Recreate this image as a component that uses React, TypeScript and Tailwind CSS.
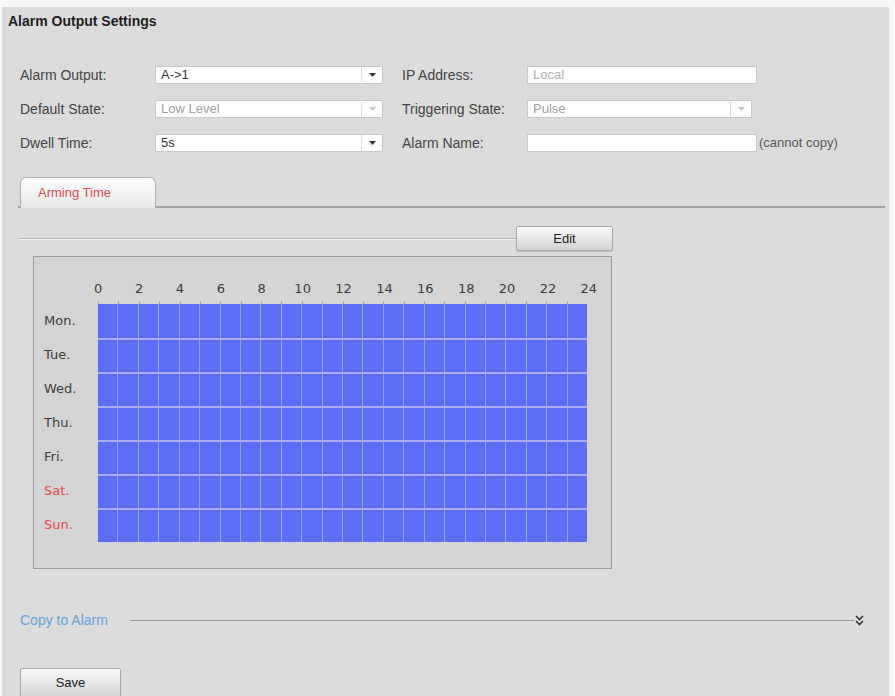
import React from "react";

const HOURS = Array.from({ length: 25 }, (_, i) => i);
const DAYS = [
  { label: "Mon.", weekend: false },
  { label: "Tue.", weekend: false },
  { label: "Wed.", weekend: false },
  { label: "Thu.", weekend: false },
  { label: "Fri.", weekend: false },
  { label: "Sat.", weekend: true },
  { label: "Sun.", weekend: true },
];

function Arrow({ disabled }: { disabled?: boolean }) {
  return (
    <svg width="7" height="4" viewBox="0 0 7 4">
      <path d="M0 0h7L3.5 4z" fill={disabled ? "#c4c4c4" : "#333"} />
    </svg>
  );
}

function Select({
  value,
  width,
  disabled,
}: {
  value: string;
  width: string;
  disabled?: boolean;
}) {
  return (
    <div className={`flex h-[18px] ${width} border border-[#c9c9c9] bg-white`}>
      <span
        className={`flex-1 pl-[5px] text-[13px] leading-[16px] ${
          disabled ? "text-[#a0a0a0]" : "text-[#333]"
        }`}
      >
        {value}
      </span>
      <span className="flex w-[21px] items-center justify-center border-l border-[#dadada]">
        <Arrow disabled={disabled} />
      </span>
    </div>
  );
}

function Input({ value, width }: { value?: string; width: string }) {
  return (
    <div
      className={`h-[18px] ${width} border border-[#c9c9c9] bg-white pl-[5px] text-[13px] leading-[16px] text-[#b0b0b0]`}
    >
      {value}
    </div>
  );
}

function GrayButton({ label, className }: { label: string; className: string }) {
  return (
    <button
      className={`${className} rounded-[2px] border border-[#a9a9a9] bg-gradient-to-b from-[#fbfbfb] to-[#d2d2d2] text-[13px] text-[#222] shadow-[0_1px_1px_rgba(0,0,0,0.15)]`}
    >
      {label}
    </button>
  );
}

export default function App() {
  return (
    <div className="h-[696px] w-[895px] overflow-hidden bg-[#f7f7f7] font-['Liberation_Sans',Arial,sans-serif] text-[#444]">
      <div className="ml-[2px] mr-[6px] mt-[7px] h-[689px] bg-[#dcdcdc]">
        <h1 className="pl-[6px] pt-[5px] text-[14px] font-bold leading-[18px] text-[#1e1e1e]">
          Alarm Output Settings
        </h1>

        <div className="mt-[36px] flex flex-col gap-[16px] pl-[18px] text-[14px]">
          <div className="flex h-[18px] items-center">
            <span className="w-[135px]">Alarm Output:</span>
            <Select value="A->1" width="w-[228px]" />
            <span className="ml-[19px] w-[125px]">IP Address:</span>
            <Input value="Local" width="w-[230px]" />
          </div>
          <div className="flex h-[18px] items-center">
            <span className="w-[135px]">Default State:</span>
            <Select value="Low Level" width="w-[228px]" disabled />
            <span className="ml-[19px] w-[125px]">Triggering State:</span>
            <Select value="Pulse" width="w-[225px]" disabled />
          </div>
          <div className="flex h-[18px] items-center">
            <span className="w-[135px]">Dwell Time:</span>
            <Select value="5s" width="w-[228px]" />
            <span className="ml-[19px] w-[125px]">Alarm Name:</span>
            <Input width="w-[230px]" />
            <span className="ml-[2px] text-[13px] text-[#555]">(cannot copy)</span>
          </div>
        </div>

        <div className="mt-[25px] flex items-end pl-[16px] pr-[4px]">
          <div className="h-[2px] w-[2px] bg-[#a0a0a0]" />
          <div className="flex h-[31px] w-[136px] items-center rounded-t-[6px] border border-b-0 border-[#b0b0b0] bg-gradient-to-b from-[#ffffff] to-[#e6e6e6] pl-[17px] text-[13px] text-[#e5484d]">
            Arming Time
          </div>
          <div className="h-[2px] flex-1 bg-[#a0a0a0]" />
        </div>

        <div className="mt-[18px] flex items-center pl-[16px]">
          <div className="h-px w-[498px] bg-[#b5b5b5] shadow-[0_1px_0_#f2f2f2]" />
          <GrayButton label="Edit" className="h-[25px] w-[97px]" />
        </div>

        <div className="ml-[31px] mt-[5px] h-[313px] w-[579px] border border-[#9c9c9c] bg-[#d4d4d4] font-['DejaVu_Sans',Verdana,sans-serif] text-[13px] text-[#3c3c3c]">
          <div className="ml-[54px] mt-[24px] flex h-[16px] items-center leading-[16px]">
            {HOURS.filter((h) => h % 2 === 0).map((h) => (
              <span key={h} className="w-[40.9px] shrink-0">
                <span className="inline-block w-[20.375px] text-center">{h}</span>
              </span>
            ))}
          </div>
          <div className="ml-[64px] mt-[4px] flex h-[3px] w-[489px]">
            {HOURS.slice(0, 24).map((h) => (
              <span key={h} className="h-[3px] flex-1 border-l border-[#a5a5a5]" />
            ))}
          </div>
          {DAYS.map((d, i) => (
            <div key={d.label} className="flex h-[34px]">
              <span
                className={`flex w-[64px] items-center pl-[10px] ${
                  d.weekend ? "text-[#e8474b]" : ""
                }`}
              >
                {d.label}
              </span>
              <div
                className={`flex w-[489px] bg-[#5c6ef6] ${
                  i > 0 ? "border-t-2 border-[#a9aef2]" : ""
                }`}
              >
                {HOURS.slice(0, 24).map((h) => (
                  <span
                    key={h}
                    className={`flex-1 ${h > 0 ? "border-l border-[#9aa1ec]" : ""}`}
                  />
                ))}
              </div>
            </div>
          ))}
        </div>

        <div className="mt-[42px] flex h-[18px] items-center pl-[18px] pr-[25px]">
          <span className="w-[110px] text-[14px] text-[#64a3d8]">Copy to Alarm</span>
          <div className="h-px flex-1 bg-[#9a9a9a]" />
          <svg width="9" height="11" viewBox="0 0 9 11" className="ml-[1px]">
            <path d="M1 1l3.5 3.5L8 1M1 6l3.5 3.5L8 6" fill="none" stroke="#333" strokeWidth="1.6" />
          </svg>
        </div>

        <div className="mt-[39px] pl-[18px]">
          <GrayButton label="Save" className="h-[30px] w-[101px]" />
        </div>
      </div>
    </div>
  );
}
